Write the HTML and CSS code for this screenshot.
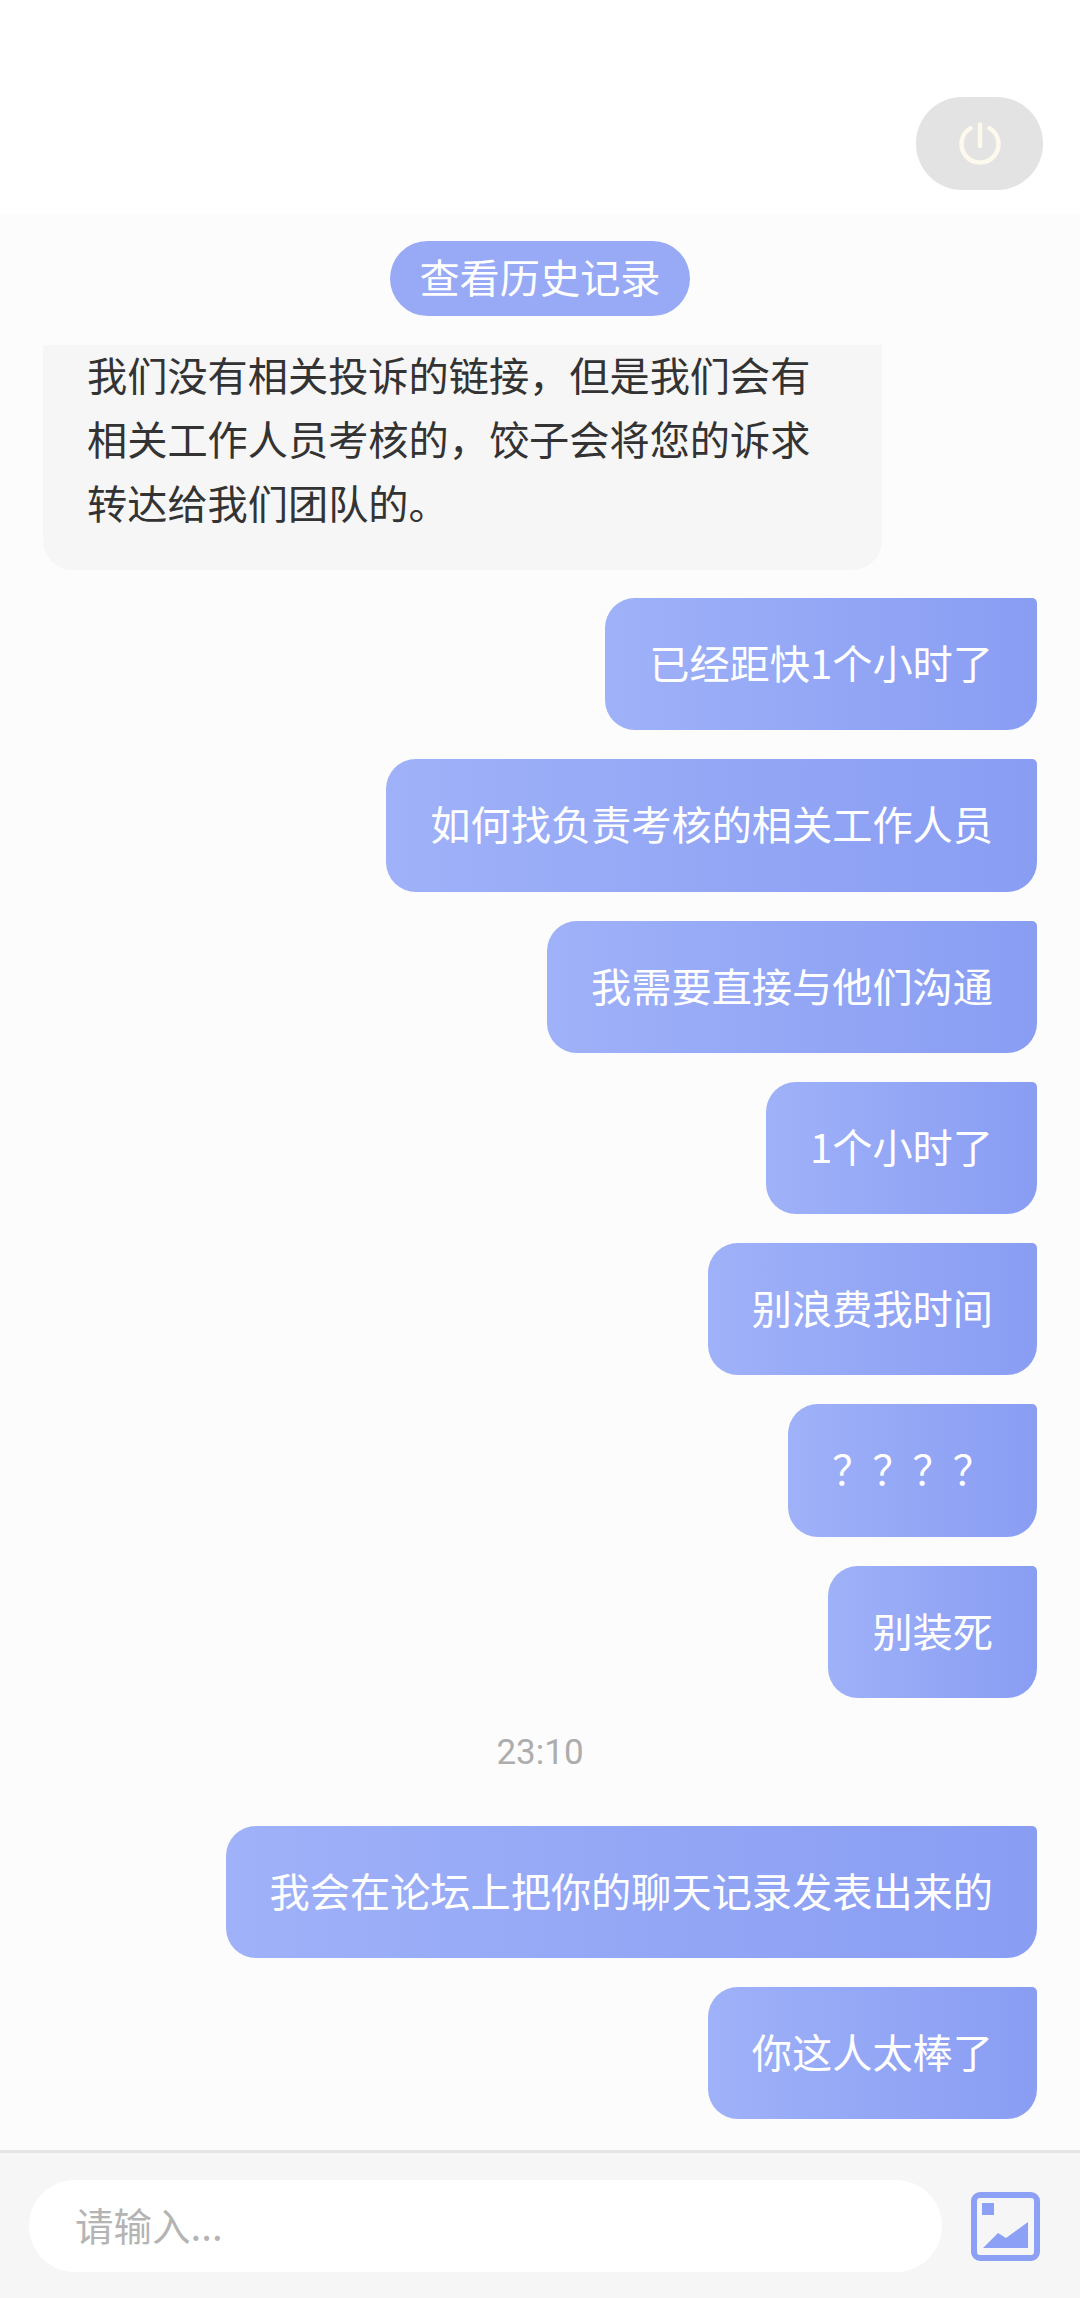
FILE: index.html
```html
<!DOCTYPE html>
<html lang="zh-CN">
<head>
<meta charset="utf-8">
<title>聊天</title>
<link rel="stylesheet" href="styles.css">
</head>
<body>
<div class="app">
  <header class="top">
    <button class="power" aria-label="power">
      <svg class="power-icon" viewBox="0 0 44 44" width="44" height="44">
        <path d="M12.5 6.100A18.500 18.500 0 1 0 31.500 6.100" fill="none" stroke="#fdf9ec" stroke-width="4.500" stroke-linecap="round"/>
        <path d="M22 2.500V24" fill="none" stroke="#fdf9ec" stroke-width="4.500" stroke-linecap="round"/>
      </svg>
    </button>
  </header>
  <main class="chat">
    <div class="history"><span class="history-pill">查看历史记录</span></div>
    <div class="bubble-left"><p class="bubble-left-text">我们没有相关投诉的链接，但是我们会有相关工作人员考核的，饺子会将您的诉求转达给我们团队的。</p></div>
    <div class="messages">
      <div class="bubble">已经距快1个小时了</div>
      <div class="bubble">如何找负责考核的相关工作人员</div>
      <div class="bubble">我需要直接与他们沟通</div>
      <div class="bubble">1个小时了</div>
      <div class="bubble">别浪费我时间</div>
      <div class="bubble">？？？？</div>
      <div class="bubble">别装死</div>
      <div class="time">23:10</div>
      <div class="bubble">我会在论坛上把你的聊天记录发表出来的</div>
      <div class="bubble">你这人太棒了</div>
    </div>
  </main>
  <footer class="bar">
    <div class="input">请输入...</div>
    <svg class="pic" viewBox="0 0 69 69" width="69" height="69">
      <rect x="3" y="3" width="63" height="63" rx="6" fill="none" stroke="#8ca1f5" stroke-width="6"/>
      <rect x="11" y="11" width="12" height="12" fill="#8ca1f5"/>
      <path d="M12 56L27 41L35 46L57 30V56Z" fill="#8ca1f5"/>
    </svg>
  </footer>
</div>
</body>
</html>
```
FILE: styles.css
```css
* { box-sizing: border-box; }
html, body { margin: 0; padding: 0; }
body {
  background: #fff;
  font-family: "Noto Sans CJK SC", "Noto Sans", sans-serif;
  font-size: 40.2px;
  line-height: 64px;
}
.app {
  width: 1080px;
  height: 2298px;
  display: flex;
  flex-direction: column;
  overflow: hidden;
}
.top {
  height: 214px;
  flex: none;
  background: #fff;
  display: flex;
  justify-content: flex-end;
  padding: 97px 37px 0 0;
}
.power {
  width: 127px;
  height: 93px;
  border: 0;
  padding: 0;
  border-radius: 46px;
  background: #e3e3e3;
  display: flex;
  align-items: center;
  justify-content: center;
}
.power-icon { display: block; }
.chat {
  flex: 1;
  background: #fcfcfc;
  padding: 27px 43px 0;
  display: flex;
  flex-direction: column;
}
.history { display: flex; justify-content: center; }
.history-pill {
  height: 75px;
  line-height: 70px;
  padding: 0 29px;
  border-radius: 38px;
  color: #fff;
  background: #98aaf6;
}
.bubble-left {
  width: 839px;
  height: 225px;
  margin-top: 29px;
  padding: 0 44px;
  color: #333;
  background: #f6f6f6;
  border-radius: 0 0 30px 30px;
  overflow: hidden;
}
.bubble-left-text { margin: -3px 0 0; }
.messages {
  margin-top: 28px;
  display: flex;
  flex-direction: column;
  align-items: flex-end;
  gap: 29px;
}
.bubble {
  height: 132.25px;
  line-height: 64px;
  padding: 32px 44px 0;
  color: #fff;
  white-space: nowrap;
  background: linear-gradient(90deg, #9fb1f8, #899df3);
  border-radius: 30px 5px 30px 30px;
}
.time {
  align-self: center;
  height: 70px;
  line-height: 52px;
  font-family: Roboto, "Noto Sans", sans-serif;
  font-size: 35px;
  color: #adadad;
}
.bar {
  height: 148px;
  flex: none;
  background: #f6f6f6;
  border-top: 3px solid #e4e4e4;
  display: flex;
  align-items: flex-start;
  padding: 27px 40px 0 29px;
  justify-content: space-between;
}
.input {
  width: 913px;
  height: 92px;
  line-height: 88px;
  padding-left: 46px;
  border-radius: 46px;
  background: #fff;
  color: #b4b4b4;
  font-size: 38.5px;
}
.pic { display: block; margin-top: 12px; }
```
